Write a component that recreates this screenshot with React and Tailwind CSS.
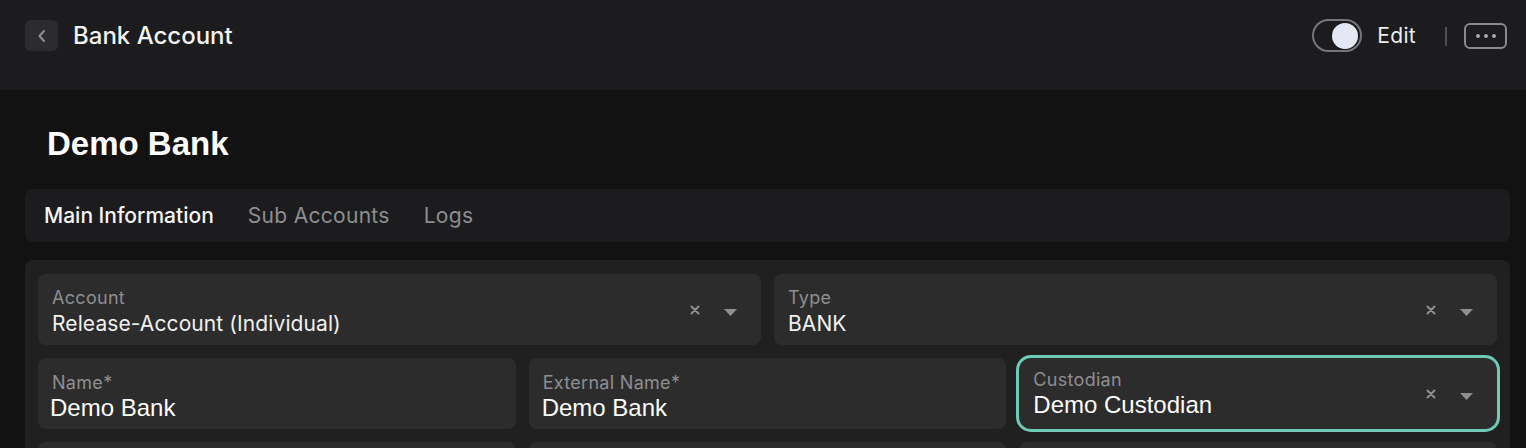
import React from "react";

const ui = { fontFamily: "Inter, 'Noto Sans', sans-serif" };
const arial = { fontFamily: "'Liberation Sans', Arial, sans-serif" };

function Icons() {
  return (
    <div className="absolute right-0 top-0 bottom-0 flex items-center">
      <svg width="10" height="10" viewBox="0 0 10 10" className="absolute right-[61px]">
        <path d="M1.5 1.5 L8.5 8.5 M8.5 1.5 L1.5 8.5" stroke="#8f8f93" strokeWidth="2" strokeLinecap="round" />
      </svg>
      <svg width="13" height="7" viewBox="0 0 13 7" className="absolute right-[24px] mt-[6px]">
        <path d="M0 0 L13 0 L6.5 7 Z" fill="#8f8f93" />
      </svg>
    </div>
  );
}

function Field({ label, value, valueClass, valueStyle, icons, focused, labelClass = "pt-[14px]" }) {
  return (
    <div
      className={`relative h-[71px] bg-[#2c2c2c] px-[14px] ${labelClass} ${
        focused ? "shadow-[0_0_0_3px_#6fcbb8] rounded-[12px]" : "rounded-[8px]"
      }`}
    >
      <div className="text-[18px] leading-[20px] tracking-[0.3px] text-[#8e8e92]" style={ui}>
        {label}
      </div>
      <div className={valueClass} style={valueStyle}>
        {value}
      </div>
      {icons && <Icons />}
    </div>
  );
}

export default function App() {
  return (
    <div className="w-[1526px] h-[448px] overflow-hidden bg-[#121212]">
      {/* Header */}
      <div className="h-[90px] bg-[#1c1c1e] flex items-start justify-between pl-[25px] pr-[19px] pt-[20px]">
        <div className="flex items-center gap-[15px]">
          <div className="w-[33px] h-[31px] rounded-[6px] bg-[#2c2c2e] flex items-center justify-center">
            <svg width="10" height="14" viewBox="0 0 10 14">
              <path d="M7 2 L2.5 7 L7 12" stroke="#8e8e93" strokeWidth="2" fill="none" strokeLinecap="round" strokeLinejoin="round" />
            </svg>
          </div>
          <div className="text-[24px] font-medium text-[#f2f2f2] leading-[30px]" style={ui}>
            Bank Account
          </div>
        </div>
        <div className="flex items-center">
          <div className="w-[50px] h-[33px] rounded-full border-2 border-[#76767a] flex items-center justify-end pr-[2px] -mt-[1px]">
            <div className="w-[26px] h-[26px] rounded-full bg-[#e5e7f5]" />
          </div>
          <div className="ml-[15px] text-[21px] tracking-[0.3px] text-[#ececec] leading-[30px]" style={ui}>
            Edit
          </div>
          <div className="ml-[29px] w-[2px] h-[19px] bg-[#4f4f52]" />
          <div className="ml-[17px] w-[43px] h-[26px] rounded-[6px] border-2 border-[#8a8a8e] flex items-center justify-center gap-[4px]">
            <div className="w-[4px] h-[4px] rounded-full bg-[#a8a8ac]" />
            <div className="w-[4px] h-[4px] rounded-full bg-[#a8a8ac]" />
            <div className="w-[4px] h-[4px] rounded-full bg-[#a8a8ac]" />
          </div>
        </div>
      </div>

      {/* Title */}
      <div className="px-[47px] pt-[36px] h-[99px]">
        <div className="text-[33px] font-bold text-white leading-[36px]" style={arial}>
          Demo Bank
        </div>
      </div>

      {/* Tabs */}
      <div className="ml-[25px] mr-[16px] h-[53px] rounded-[8px] bg-[#1c1c1e] flex items-center pl-[19px] gap-[34px] pt-[1px]" style={ui}>
        <div className="text-[21px] font-medium text-[#f5f5f5]">Main Information</div>
        <div className="text-[21px] tracking-[0.3px] text-[#8e8e92]">Sub Accounts</div>
        <div className="text-[21px] tracking-[0.3px] text-[#8e8e92]">Logs</div>
      </div>

      {/* Form */}
      <div className="ml-[25px] mr-[16px] mt-[18px] rounded-[8px] bg-[#202020] p-[13px] pt-[14px] flex flex-col gap-[13px]">
        <div className="grid grid-cols-2 gap-[13px]">
          <Field
            label="Account"
            value="Release-Account (Individual)"
            valueClass="mt-[4px] text-[21px] leading-[24px] tracking-[0.1px] text-[#f0f0f0]"
            valueStyle={ui}
            icons
          />
          <Field
            label="Type"
            value="BANK"
            valueClass="mt-[4px] text-[21px] leading-[24px] tracking-[0.1px] text-[#f0f0f0]"
            valueStyle={ui}
            icons
          />
        </div>
        <div className="grid grid-cols-3 gap-[13px]">
          <Field
            label="Name*"
            value="Demo Bank"
            valueClass="mt-[1px] -ml-[2px] text-[24px] leading-[28px] text-white"
            valueStyle={arial}
            labelClass="pt-[15px]"
          />
          <Field
            label="External Name*"
            value="Demo Bank"
            valueClass="mt-[1px] -ml-[1px] text-[24px] leading-[28px] text-white"
            valueStyle={arial}
            labelClass="pt-[15px]"
          />
          <Field
            label="Custodian"
            value="Demo Custodian"
            valueClass="mt-[1px] text-[24px] leading-[28px] text-white"
            valueStyle={arial}
            labelClass="pt-[12px]"
            icons
            focused
          />
        </div>
        <div className="grid grid-cols-3 gap-[13px]">
          <div className="h-[71px] rounded-[8px] bg-[#2c2c2c]" />
          <div className="h-[71px] rounded-[8px] bg-[#2c2c2c]" />
          <div className="h-[71px] rounded-[8px] bg-[#2c2c2c]" />
        </div>
      </div>
    </div>
  );
}
